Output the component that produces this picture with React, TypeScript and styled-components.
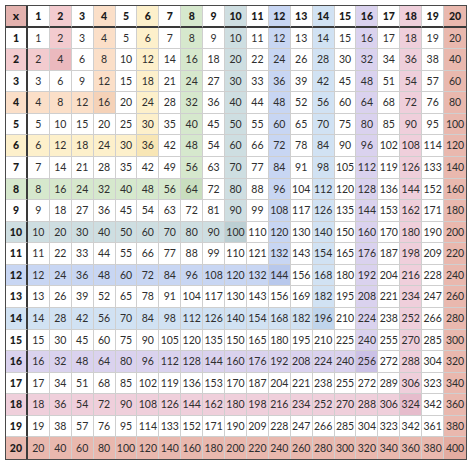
import React from "react";
import styled, { createGlobalStyle } from "styled-components";

const Global = createGlobalStyle`
  html, body { margin: 0; padding: 0; background: #ffffff; }
  body { font-family: "Lato", "Noto Sans", sans-serif; }
`;

const N = 20;

const palette: Record<number, string> = {
  2: "#f3cbcf",
  4: "#fbdfc8",
  6: "#fdf0cb",
  8: "#d6e8cd",
  10: "#cedee1",
  12: "#c8d6f3",
  14: "#d1e2f3",
  16: "#dad2ee",
  18: "#efcfdb",
  20: "#e9b8ae",
};

const diag: Record<number, string> = {
  2: "#ebb9be",
  4: "#f5d2b8",
  6: "#f8e6b5",
  8: "#c9debf",
  10: "#bccfd3",
  12: "#b8c8ec",
  14: "#c0d5ec",
  16: "#cbc1e6",
  18: "#e6bccc",
  20: "#e3aca1",
};

const Page = styled.div`
  padding: 5px 0 0 5px;
`;

const Table = styled.div`
  box-sizing: border-box;
  width: 462px;
  height: 455px;
  display: grid;
  grid-template-columns: repeat(21, 1fr);
  grid-template-rows: repeat(21, 1fr);
  border: 1px solid #4a4a4a;
  background: #ffffff;
`;

const Cell = styled.div<{
  $bg: string;
  $header: boolean;
  $corner: boolean;
  $thickRight: boolean;
  $thickBottom: boolean;
  $lastCol: boolean;
  $lastRow: boolean;
}>`
  box-sizing: border-box;
  display: flex;
  align-items: center;
  justify-content: center;
  background: ${(p) => p.$bg};
  font-size: ${(p) => (p.$corner ? "12px" : "10.5px")};
  font-weight: ${(p) => (p.$header ? 900 : 400)};
  color: ${(p) => (p.$header ? "#1a1a1a" : "#2e2e2e")};
  border-right: ${(p) =>
    p.$lastCol ? "none" : p.$thickRight ? "2px solid #3a3a3a" : "1px solid #cfcfcf"};
  border-bottom: ${(p) =>
    p.$lastRow ? "none" : p.$thickBottom ? "2px solid #3a3a3a" : "1px solid #cfcfcf"};
  line-height: 1;
  min-width: 0;
  min-height: 0;
`;

function colorFor(r: number, c: number): string {
  if (r === 0 && c === 0) return "#e3b2ae";
  if (r === 0) return c % 2 === 0 ? palette[c] : "#ffffff";
  if (c === 0) return r % 2 === 0 ? palette[r] : "#ffffff";
  const m = Math.max(r, c);
  if (m % 2 !== 0) return "#ffffff";
  if (r === c) return diag[m];
  return palette[m];
}

export default function App() {
  const cells: React.ReactNode[] = [];
  for (let r = 0; r <= N; r++) {
    for (let c = 0; c <= N; c++) {
      const header = r === 0 || c === 0;
      const text =
        r === 0 && c === 0 ? "x" : r === 0 ? String(c) : c === 0 ? String(r) : String(r * c);
      cells.push(
        <Cell
          key={`${r}-${c}`}
          $bg={colorFor(r, c)}
          $header={header}
          $corner={r === 0 && c === 0}
          $thickRight={c === 0}
          $thickBottom={r === 0}
          $lastCol={c === N}
          $lastRow={r === N}
        >
          {text}
        </Cell>
      );
    }
  }
  return (
    <>
      <Global />
      <Page>
        <Table>{cells}</Table>
      </Page>
    </>
  );
}
